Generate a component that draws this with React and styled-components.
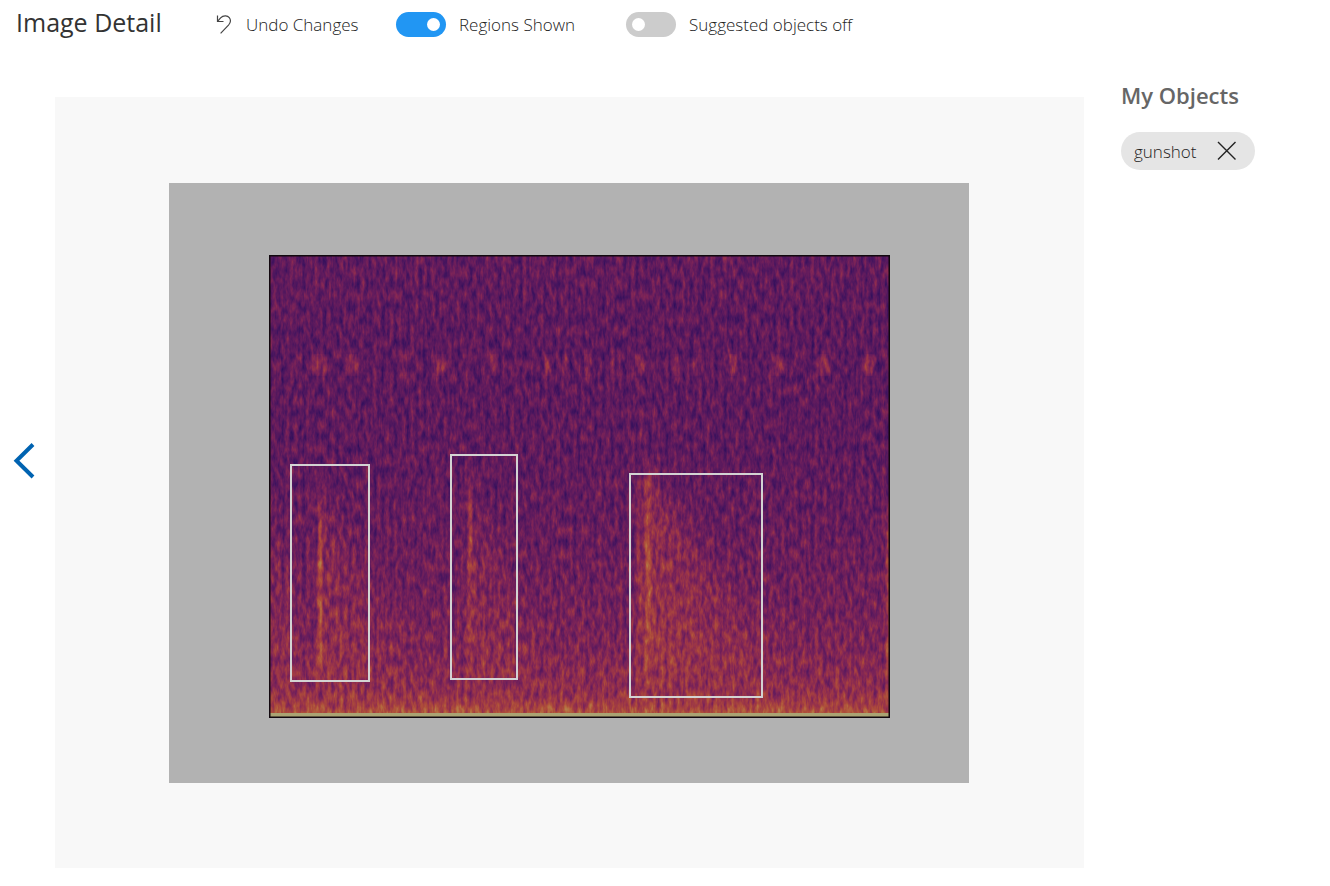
import React, { useState } from 'react';
import styled, { createGlobalStyle } from 'styled-components';

const GlobalStyle = createGlobalStyle`
  * {
    box-sizing: border-box;
  }

  body {
    margin: 0;
    background: #fff;
    color: #333;
    font-family: 'Open Sans', 'Noto Sans', sans-serif;
  }
`;

const Header = styled.header`
  display: grid;
  grid-template-columns: 200px 180px 230px auto;
  align-items: center;
  height: 53px;
  padding: 0 0 4px 16px;
`;

const Title = styled.h1`
  margin: 0 0 6px;
  font-size: 25px;
  line-height: 32px;
  font-weight: 400;
  white-space: nowrap;
`;

const UndoButton = styled.button`
  display: flex;
  align-items: center;
  gap: 14px;
  padding: 0;
  border: none;
  background: none;
  color: #222;
  font-family: inherit;
  font-size: 17px;
  line-height: 24px;
  font-weight: 300;
  white-space: nowrap;
  cursor: pointer;
`;

const ToggleLabel = styled.label`
  display: flex;
  align-items: center;
  gap: 13px;
  color: #222;
  font-size: 17px;
  line-height: 24px;
  font-weight: 300;
  white-space: nowrap;
  cursor: pointer;
`;

const Toggle = styled.input.attrs({ type: 'checkbox' })`
  appearance: none;
  display: flex;
  align-items: center;
  width: 50px;
  height: 25px;
  margin: 0;
  padding: 0 6px;
  border-radius: 13px;
  background: #ccc;
  cursor: pointer;

  &::before {
    content: '';
    width: 13px;
    height: 13px;
    border-radius: 50%;
    background: #fff;
  }

  &:checked {
    justify-content: flex-end;
    background: #2196f3;
  }
`;

const Main = styled.main`
  display: grid;
  grid-template-columns: 55px minmax(0, 1fr) 246px;
`;

const PreviousButton = styled.button`
  display: flex;
  align-items: center;
  padding: 0 0 0 12px;
  border: none;
  background: none;
  cursor: pointer;
`;

const Stage = styled.section`
  display: flex;
  justify-content: center;
  margin-top: 44px;
  padding: 86px 1px 85px 0;
  background: #f8f8f8;
`;

const ImageCanvas = styled.div`
  position: relative;
  width: 800px;

  svg {
    display: block;
    width: 100%;
  }
`;

// Regions are stored in the pixels of an 800 x 600 image
const Region = styled.button`
  position: absolute;
  left: ${props => props.$box.x / 8}%;
  top: ${props => props.$box.y / 6}%;
  width: ${props => props.$box.w / 8}%;
  height: ${props => props.$box.h / 6}%;
  padding: 0;
  border: 2px solid #d3d3d3;
  background: none;
  cursor: pointer;
`;

const Sidebar = styled.aside`
  padding: 28px 16px 0 37px;
`;

const SidebarTitle = styled.h2`
  margin: 0 0 23px;
  color: #666;
  font-size: 22px;
  line-height: 28px;
  font-weight: 600;
`;

const Tag = styled.span`
  display: inline-flex;
  align-items: center;
  gap: 20px;
  height: 38px;
  padding: 0 18px 0 13px;
  border-radius: 19px;
  background: #e5e5e5;
  color: #222;
  font-size: 17px;
  font-weight: 300;
`;

const RemoveButton = styled.button`
  display: flex;
  padding: 0;
  border: none;
  background: none;
  cursor: pointer;
`;

const regions = [
  { x: 121, y: 281, w: 80, h: 218 },
  { x: 281, y: 271, w: 68, h: 226 },
  { x: 460, y: 290, w: 134, h: 225 }
];

// Faint calls along the upper band: x, width, strength
const calls = [
  [29, 8, 0.12], [51, 14, 0.26], [83, 13, 0.22], [107, 6, 0.1], [135, 7, 0.22],
  [172, 12, 0.24], [198, 5, 0.12], [224, 7, 0.22], [248, 6, 0.1], [279, 6, 0.3],
  [296, 7, 0.18], [318, 7, 0.24], [347, 9, 0.14], [371, 12, 0.16], [407, 6, 0.26],
  [428, 10, 0.18], [464, 7, 0.36], [508, 14, 0.24], [555, 11, 0.3], [600, 9, 0.34]
];

const colourMap = {
  r: '.05 .12 .19 .29 .39 .5 .61 .68 .71 .69 .67',
  g: '.02 .04 .06 .085 .11 .145 .21 .3 .43 .55 .67',
  b: '.22 .30 .36 .37 .365 .34 .28 .23 .25 .33 .47'
};

function Spectrogram() {
  return (
    <svg viewBox="0 0 800 600" role="img" aria-label="Spectrogram">
      <defs>
        <linearGradient id="floor" x1="0" y1="0" x2="0" y2="1">
          <stop offset="0" stopColor="#646464" />
          <stop offset="0.2" stopColor="#5f5f5f" />
          <stop offset="0.45" stopColor="#626262" />
          <stop offset="0.62" stopColor="#6a6a6a" />
          <stop offset="0.78" stopColor="#757575" />
          <stop offset="0.88" stopColor="#828282" />
          <stop offset="0.94" stopColor="#8c8c8c" />
          <stop offset="0.97" stopColor="#a0a0a0" />
          <stop offset="1" stopColor="#c4c4c4" />
        </linearGradient>
        <linearGradient id="spike" x1="0" y1="0" x2="0" y2="1">
          <stop offset="0" stopColor="#fff" stopOpacity="0" />
          <stop offset="0.15" stopColor="#fff" stopOpacity="0.28" />
          <stop offset="0.45" stopColor="#fff" stopOpacity="0.42" />
          <stop offset="0.65" stopColor="#fff" stopOpacity="0.34" />
          <stop offset="1" stopColor="#fff" stopOpacity="0.14" />
        </linearGradient>
        <linearGradient id="tail" x1="0" y1="0" x2="1" y2="0">
          <stop offset="0" stopColor="#fff" stopOpacity="0.28" />
          <stop offset="0.4" stopColor="#fff" stopOpacity="0.16" />
          <stop offset="1" stopColor="#fff" stopOpacity="0" />
        </linearGradient>
        <filter id="narrow" x="-200%" y="-10%" width="500%" height="120%">
          <feGaussianBlur stdDeviation="1 3" />
        </filter>
        <filter id="wide" x="-50%" y="-50%" width="200%" height="200%">
          <feGaussianBlur stdDeviation="6 16" />
        </filter>
        <filter
          id="heat"
          filterUnits="userSpaceOnUse"
          x="0"
          y="0"
          width="621"
          height="462"
          colorInterpolationFilters="sRGB"
        >
          <feTurbulence type="fractalNoise" baseFrequency="0.24 0.085" numOctaves="3" seed="23" />
          <feColorMatrix values="0 0 0 1 0  0 0 0 1 0  0 0 0 1 0  0 0 0 0 1" result="noise" />
          <feComposite in="SourceGraphic" in2="noise" operator="arithmetic" k1="0" k2="1" k3="0.46" k4="-0.23" />
          <feComponentTransfer>
            <feFuncR type="table" tableValues={colourMap.r} />
            <feFuncG type="table" tableValues={colourMap.g} />
            <feFuncB type="table" tableValues={colourMap.b} />
            <feFuncA type="linear" slope="0" intercept="1" />
          </feComponentTransfer>
        </filter>
      </defs>
      <rect width="800" height="600" fill="#b2b2b2" />
      <g transform="translate(100 72)">
        <g filter="url(#heat)">
          <rect width="621" height="463" fill="url(#floor)" />
          {calls.map(([x, width, opacity]) => (
            <rect
              key={x}
              x={x - width / 2}
              y="101"
              width={width}
              height="18"
              fill="#fff"
              opacity={opacity}
              filter="url(#narrow)"
            />
          ))}
          <g filter="url(#wide)" fill="url(#tail)">
            <path d="M50 220 L60 260 L90 300 L140 390 L150 425 L50 425Z" opacity="0.6" />
            <path d="M200 220 L210 260 L240 310 L280 390 L290 425 L200 425Z" opacity="0.5" />
            <path d="M373 205 L390 230 L430 290 L500 380 L540 425 L373 425Z" opacity="0.85" />
            <path d="M0 270 L25 330 L40 420 L0 420Z" opacity="0.5" />
          </g>
          <g filter="url(#narrow)">
            <rect x="49" y="225" width="4" height="200" fill="url(#spike)" />
            <rect x="50" y="290" width="3" height="135" fill="#fff" opacity="0.24" />
            <rect x="199" y="205" width="4" height="220" fill="url(#spike)" opacity="0.9" />
            <rect x="368" y="215" width="4" height="210" fill="url(#spike)" opacity="0.5" />
            <rect x="376" y="200" width="6" height="230" fill="url(#spike)" opacity="0.9" />
            <rect x="370" y="100" width="4" height="120" fill="#fff" opacity="0.08" />
            <rect x="617" y="230" width="5" height="210" fill="url(#spike)" />
          </g>
        </g>
        <rect x="0" y="458" width="621" height="4" fill="#aaa373" />
        <rect x="0.75" y="0.75" width="619.5" height="461.5" fill="none" stroke="#12080f" strokeWidth="1.5" />
      </g>
    </svg>
  );
}

function App() {
  const [regionsShown, setRegionsShown] = useState(true);
  const [suggestions, setSuggestions] = useState(false);
  const [tags, setTags] = useState(['gunshot']);

  const undoChanges = () => {
    setRegionsShown(true);
    setSuggestions(false);
    setTags(['gunshot']);
  };

  return (
    <>
      <GlobalStyle />
      <Header>
        <Title>Image Detail</Title>
        <div>
          <UndoButton type="button" onClick={undoChanges}>
            <svg width="16" height="20" viewBox="0 0 16 20" fill="none" stroke="#444" strokeWidth="1.2">
              <path d="M1.5 0.5V6.5H7.5M1.8 6.2L4.6 2.9C6.2 1.1 8 0.7 9.6 0.8C12.8 1 14.6 3.4 14.4 6.2C14.3 7.8 13.6 8.9 12.5 10.1L4.6 18.3" />
            </svg>
            Undo Changes
          </UndoButton>
        </div>
        <ToggleLabel>
          <Toggle checked={regionsShown} onChange={(e) => setRegionsShown(e.target.checked)} />
          {regionsShown ? 'Regions Shown' : 'Regions Hidden'}
        </ToggleLabel>
        <ToggleLabel>
          <Toggle checked={suggestions} onChange={(e) => setSuggestions(e.target.checked)} />
          {suggestions ? 'Suggested objects on' : 'Suggested objects off'}
        </ToggleLabel>
      </Header>

      <Main>
        <PreviousButton type="button" aria-label="Previous image">
          <svg width="24" height="36" viewBox="0 0 24 36" fill="none" stroke="#0063b1" strokeWidth="4">
            <path d="M21 1.5L4.5 17.8L21 34" />
          </svg>
        </PreviousButton>

        <Stage>
          <ImageCanvas>
            <Spectrogram />
            {regionsShown && regions.map((box, index) => (
              <Region key={index} type="button" aria-label={`Region ${index + 1}`} $box={box} />
            ))}
          </ImageCanvas>
        </Stage>

        <Sidebar>
          <SidebarTitle>My Objects</SidebarTitle>
          {tags.map(tag => (
            <Tag key={tag}>
              {tag}
              <RemoveButton
                type="button"
                aria-label={`Remove ${tag}`}
                onClick={() => setTags(tags.filter(item => item !== tag))}
              >
                <svg width="20" height="20" viewBox="0 0 20 20" stroke="#222" strokeWidth="1.4">
                  <path d="M1 1L18.5 18.5M18.5 1L1 18.5" />
                </svg>
              </RemoveButton>
            </Tag>
          ))}
        </Sidebar>
      </Main>
    </>
  );
}

export default App;
